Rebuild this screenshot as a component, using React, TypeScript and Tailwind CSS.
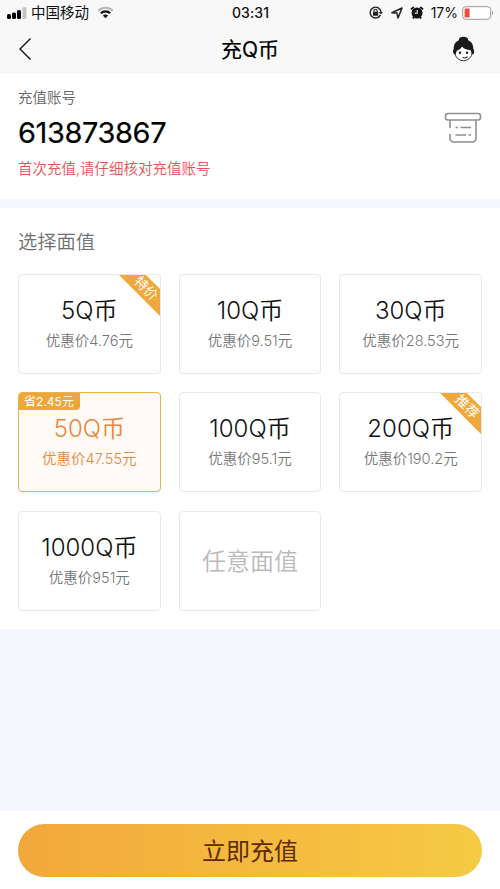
import clsx from "clsx";

interface Amount {
  label: string;
  price: string;
  ribbon?: string;
  saving?: string;
  selected?: boolean;
}

const amounts: Amount[] = [
  { label: "5Q币", price: "优惠价4.76元", ribbon: "特价" },
  { label: "10Q币", price: "优惠价9.51元" },
  { label: "30Q币", price: "优惠价28.53元" },
  { label: "50Q币", price: "优惠价47.55元", saving: "省2.45元", selected: true },
  { label: "100Q币", price: "优惠价95.1元" },
  { label: "200Q币", price: "优惠价190.2元", ribbon: "推荐" },
  { label: "1000Q币", price: "优惠价951元" },
];

const StatusBar = () => (
  <div className="grid h-[25px] grid-cols-[1fr_auto_1fr] items-center pl-[7px] pr-[6px] text-[14px] leading-none text-[#111]">
    <div className="flex items-center">
      <svg width="20" height="12" viewBox="0 0 20 12">
        <rect x="0" y="7" width="4" height="5" rx="1.5" />
        <rect x="5" y="5.5" width="4" height="6.5" rx="1.5" />
        <rect x="10" y="3" width="4" height="9" rx="1.5" />
        <rect x="15.5" y="0" width="4" height="12" rx="1.5" fill="#c4c4c4" />
      </svg>
      <span className="ml-[4px] mt-[2px] text-[14.5px]">中国移动</span>
      <svg className="ml-2" width="17" height="13" viewBox="0 0 17 13" fill="none">
        <path d="M1.2 4.7a10.5 10.5 0 0 1 14.6 0" stroke="#b9b9b9" strokeWidth="2.2" />
        <path d="M3.8 7.3a6.8 6.8 0 0 1 9.4 0" stroke="#111" strokeWidth="2.2" />
        <path d="M5.9 9.6a3.8 3.8 0 0 1 5.2 0L8.5 12.2z" fill="#111" />
      </svg>
    </div>
    <span className="font-medium tracking-[0.1px]">03:31</span>
    <div className="flex items-center justify-end">
      <svg width="14" height="13" viewBox="0 0 14 13" fill="none" stroke="#222">
        <path d="M11.5 8.9A5.4 5.4 0 1 1 12 6" strokeWidth="1.4" />
        <path d="M9.9 6h4l-2 2.5z" fill="#222" stroke="none" />
        <rect x="4" y="5.8" width="5.2" height="3.9" rx=".5" fill="#222" stroke="none" />
        <path d="M5 6V4.8a1.6 1.6 0 0 1 3.2 0V6" strokeWidth="1.1" />
      </svg>
      <svg className="ml-2" width="12" height="12" viewBox="0 0 12 12" fill="none" stroke="#222" strokeWidth="1.5" strokeLinejoin="round">
        <path d="M.9 5.8 11 1 7 11 5.9 6.1z" />
      </svg>
      <svg className="ml-[7px]" width="14" height="13" viewBox="0 0 14 13" fill="none">
        <circle cx="7" cy="7" r="5.5" fill="#111" />
        <path d="M1 3.4 3.8 1M13 3.4 10.2 1M2.8 12.5 4 11M11.2 12.5 10 11" stroke="#111" strokeWidth="1.8" />
        <path d="M7.2 4v3.3H4.6" stroke="#f8f8f8" strokeWidth="1.1" />
      </svg>
      <span className="ml-[7px]">17%</span>
      <svg className="ml-1" width="32" height="14" viewBox="0 0 32 14">
        <rect x=".7" y=".7" width="28" height="12.6" rx="3" fill="#fff" stroke="#999" />
        <rect x="2.6" y="2.6" width="5" height="8.8" rx="1" fill="#ed4b3f" />
        <path d="M30 4.8c1.4.5 1.4 3.9 0 4.4z" fill="#999" />
      </svg>
    </div>
  </div>
);

const Avatar = () => (
  <svg width="23" height="26" viewBox="0 0 23 26">
    <ellipse cx="11.5" cy="16.5" rx="8.600" ry="8.2" fill="#fff" stroke="#333" strokeWidth="1" />
    <path
      d="M6.800 4.200C6.500-.3 16.500-.3 16.200 4.200c3.600 1.500 5.100 4.700 5.100 8.800 1.400 1.200 1.200 4.800-.8 5.600-.8-.9-1-3.300-2.300-4.600-3.700 0-6.500-1.300-8.200-3.400-1.200 2.100-2.800 3.400-4.900 4-.9.900-1 3.100-2.100 4.100C.9 17.900.4 14.200 1.700 13c0-4.100 1.500-7.300 5.100-8.800z"
      fill="#1a1a1c"
    />
    <circle cx="8" cy="16.800" r="1.200" fill="#222" />
    <circle cx="15" cy="16.800" r="1.200" fill="#222" />
    <path d="M10.500 21.300c1.400.9 3.600.7 5-.5" fill="none" stroke="#333" strokeWidth="1.200" />
  </svg>
);

const RecordIcon = () => (
  <svg width="38" height="32" viewBox="0 0 38 32" fill="none" stroke="#8f8f8f" strokeWidth="1.600">
    <rect x="1.500" y="1.500" width="35" height="6.500" rx="2.500" />
    <path d="M6 8v8M6 22v4.500a3.500 3.500 0 0 0 3.500 3.500h19a3.500 3.500 0 0 0 3.500-3.500V8" />
    <path d="M11.500 15.500h2.500M16.500 15.500h10.500M11.500 23h10.500M24.500 23h2.500" />
  </svg>
);

const AmountCard = ({ label, price, ribbon, saving, selected }: Amount) => (
  <button
    className={clsx(
      "relative flex h-[100px] flex-col items-center overflow-hidden rounded-[4px] border pt-[22px]",
      selected ? "border-[#edb04a] bg-[#fffaf5] text-[#e8883f]" : "border-[#e9e9e9] bg-white text-[#111]",
    )}
  >
    {saving && (
      <span className="absolute -left-px -top-px flex h-[18px] w-[62px] items-center justify-center rounded-br-[4px] bg-[#eda638] pt-px text-[12px] leading-none text-white">
        {saving}
      </span>
    )}
    {ribbon && (
      <span className="absolute -right-[31px] top-[4px] flex h-[19px] w-[90px] rotate-45 items-center justify-center bg-[#f0a83a] text-[13.500px] leading-none text-white">
        {ribbon}
      </span>
    )}
    <span className="text-[24px] font-[350] leading-[28px]">{label}</span>
    <span className={clsx("mt-[6px] text-[14.500px] font-[350] leading-[20px]", !selected && "text-[#777]")}>{price}</span>
  </button>
);

const App = () => {
  return (
    <div className="flex h-[889px] w-[500px] flex-col overflow-hidden bg-[#f4f7fd] font-['Inter','Noto_Sans_CJK_SC',sans-serif]">
      <header className="h-[73px] shrink-0 border-b border-[#f3f3f3] bg-[#f8f8f8]">
        <StatusBar />
        <div className="grid h-[47px] grid-cols-[1fr_auto_1fr] items-center pl-[18px] pr-[25px]">
          <svg width="14" height="24" viewBox="0 0 14 24" fill="none" stroke="#111" strokeWidth="1.400">
            <path d="M12.500 1.500 2 12l10.500 10.500" />
          </svg>
          <h1 className="ml-[7px] mt-[2px] text-[21px] leading-none text-black [-webkit-text-stroke:0.2px]">充Q币</h1>
          <div className="flex justify-end">
            <Avatar />
          </div>
        </div>
      </header>

      <section className="flex h-[126px] shrink-0 items-start justify-between bg-white pl-[18px] pr-[18px] pt-[14px]">
        <div>
          <p className="text-[14.500px] font-[350] leading-[22px] text-[#666]">充值账号</p>
          <p className="mt-[6px] text-[29px] leading-[36px] tracking-[-0.4px] text-black [-webkit-text-stroke:0.2px]">613873867</p>
          <p className="mt-[7px] text-[14.500px] font-[350] leading-[22px] text-[#e65353]">首次充值,请仔细核对充值账号</p>
        </div>
        <div className="mt-[25px]">
          <RecordIcon />
        </div>
      </section>

      <section className="mt-[9px] h-[421px] shrink-0 bg-white px-[18px] pt-[20px]">
        <h2 className="text-[19.300px] font-[350] leading-[28px] text-[#707070]">选择面值</h2>
        <div className="mt-[18px] grid grid-cols-3 gap-x-[18px] gap-y-[18.400px]">
          {amounts.map((amount) => (
            <AmountCard key={amount.label} {...amount} />
          ))}
          <button className="flex h-[100px] items-center justify-center rounded-[4px] border border-[#e9e9e9] pt-[2px] text-[24px] font-[350] text-[#bbb]">
            任意面值
          </button>
        </div>
      </section>

      <footer className="mt-auto h-[78px] shrink-0 bg-white px-[18px] pt-[13px]">
        <button className="flex h-[53px] w-full items-center justify-center rounded-full bg-linear-to-r from-[#f2a83b] to-[#f6ca43] pt-[2px] text-[24px] text-[#5b2c06]">
          立即充值
        </button>
      </footer>
    </div>
  );
};

export default App;
